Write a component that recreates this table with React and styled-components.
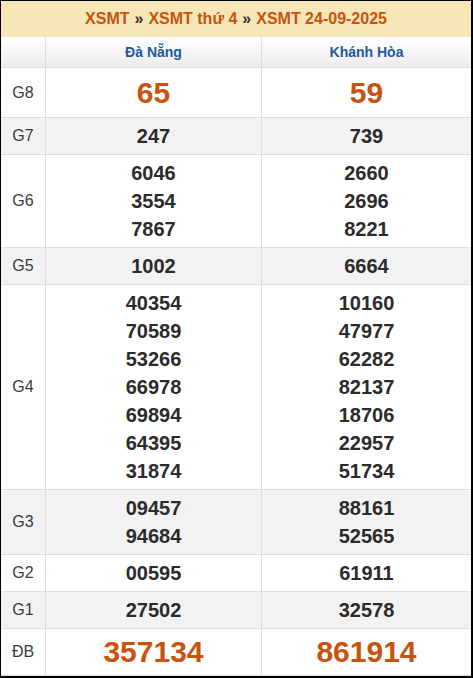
import React from 'react';
import styled, { createGlobalStyle } from 'styled-components';

const GlobalStyle = createGlobalStyle`
  body {
    margin: 0;
    font-family: "Liberation Sans", Arial, sans-serif;
    background: #fff;
  }
`;

const Frame = styled.div`
  width: 473px;
  height: 678px;
  box-sizing: border-box;
  border-top: 1px solid #000;
  border-left: 1px solid #000;
  border-right: 2px solid #000;
  border-bottom: 2px solid #000;
  overflow: hidden;
`;

const Title = styled.div`
  height: 36px;
  background: #f7e7b7;
  display: flex;
  align-items: center;
  justify-content: center;
  font-size: 16px;
  font-weight: bold;
  color: #c8530e;
  gap: 5px;
`;

const Sep = styled.span`
  color: #333;
`;

const Grid = styled.div`
  display: grid;
  grid-template-columns: 44px 216px 1fr;
`;

const Cell = styled.div`
  display: flex;
  flex-direction: column;
  align-items: center;
  justify-content: center;
  padding: 4px 0;
  border-bottom: 1px solid #ddd;
  border-left: ${p => (p.$first ? 'none' : '1px solid #ddd')};
  background: ${p => (p.$alt ? '#f2f2f2' : '#fff')};
`;

const HeadCell = styled(Cell)`
  height: 31px;
  padding: 0;
  box-sizing: border-box;
  background: linear-gradient(#ffffff, #ececec);
  color: #1d5a9d;
  font-size: 14px;
  font-weight: bold;
`;

const Label = styled.span`
  font-size: 16px;
  color: #3a3a3a;
`;

const Num = styled.span`
  font-size: ${p => (p.$big ? '30px' : '20px')};
  line-height: ${p => p.$lh || 28}px;
  font-weight: bold;
  color: ${p => (p.$big ? '#c8530e' : '#2b2b2b')};
`;

const rows = [
  { label: 'G8', big: true, lh: 41, a: ['65'], b: ['59'] },
  { label: 'G7', a: ['247'], b: ['739'] },
  { label: 'G6', a: ['6046', '3554', '7867'], b: ['2660', '2696', '8221'] },
  { label: 'G5', a: ['1002'], b: ['6664'] },
  {
    label: 'G4',
    a: ['40354', '70589', '53266', '66978', '69894', '64395', '31874'],
    b: ['10160', '47977', '62282', '82137', '18706', '22957', '51734'],
  },
  { label: 'G3', a: ['09457', '94684'], b: ['88161', '52565'] },
  { label: 'G2', a: ['00595'], b: ['61911'] },
  { label: 'G1', a: ['27502'], b: ['32578'] },
  { label: 'ĐB', big: true, lh: 38, a: ['357134'], b: ['861914'] },
];

function App() {
  return (
    <>
      <GlobalStyle />
      <Frame>
        <Title>
          <span>XSMT</span>
          <Sep>»</Sep>
          <span>XSMT thứ 4</span>
          <Sep>»</Sep>
          <span>XSMT 24-09-2025</span>
        </Title>
        <Grid>
          <HeadCell $first />
          <HeadCell>Đà Nẵng</HeadCell>
          <HeadCell>Khánh Hòa</HeadCell>
          {rows.map((r, i) => {
            const alt = i % 2 === 1;
            return (
              <React.Fragment key={r.label}>
                <Cell $first $alt={alt}>
                  <Label>{r.label}</Label>
                </Cell>
                <Cell $alt={alt}>
                  {r.a.map(n => (
                    <Num key={n} $big={r.big} $lh={r.lh}>{n}</Num>
                  ))}
                </Cell>
                <Cell $alt={alt}>
                  {r.b.map(n => (
                    <Num key={n} $big={r.big} $lh={r.lh}>{n}</Num>
                  ))}
                </Cell>
              </React.Fragment>
            );
          })}
        </Grid>
      </Frame>
    </>
  );
}

export default App;
